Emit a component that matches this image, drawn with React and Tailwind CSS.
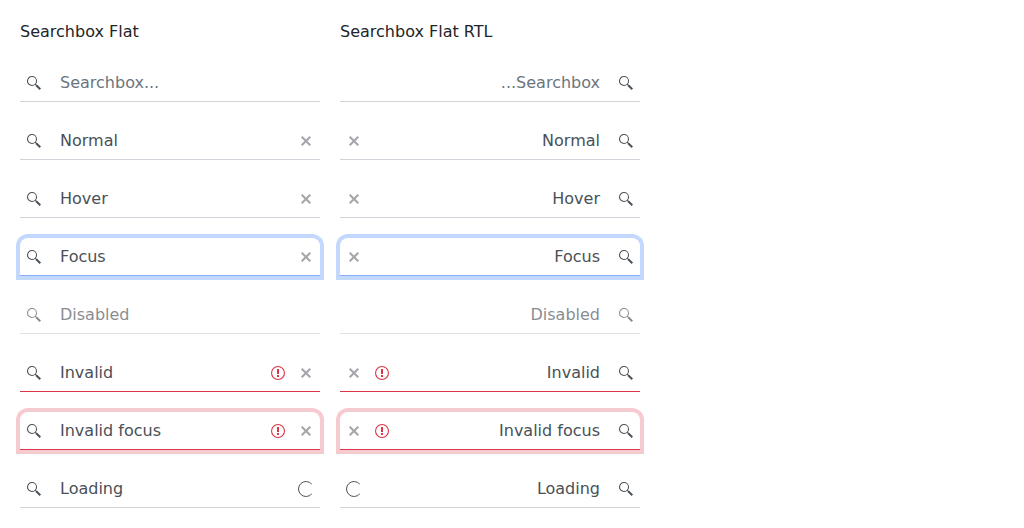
import React from 'react';
import clsx from 'clsx';

const ROWS = [
  { placeholder: true },
  { label: 'Normal', clear: true },
  { label: 'Hover', clear: true },
  { label: 'Focus', clear: true, focus: true },
  { label: 'Disabled', disabled: true },
  { label: 'Invalid', clear: true, invalid: true },
  { label: 'Invalid focus', clear: true, invalid: true, focus: true },
  { label: 'Loading', loading: true },
];

function IconCell({ className, children }) {
  return (
    <span className={clsx('flex w-7 shrink-0 items-start justify-center pt-[11px]', className)}>
      {children}
    </span>
  );
}

function SearchIcon() {
  return (
    <svg viewBox="0 0 16 16" className="size-4" fill="none" stroke="currentColor">
      <circle cx="6" cy="6" r="4.5" strokeWidth="1.05" />
      <path d="M9.2 9.2 10.6 10.6" strokeWidth="1.1" />
      <path d="M10.2 10.2 14.3 14.3" strokeWidth="2" />
    </svg>
  );
}

function ClearIcon() {
  return (
    <svg viewBox="0 0 16 16" className="size-4" fill="none" stroke="currentColor" strokeWidth="2.1">
      <path d="M3.7 3.7 12.3 12.3M12.3 3.7 3.7 12.3" />
    </svg>
  );
}

function InvalidIcon() {
  return (
    <svg viewBox="0 0 16 16" className="size-4" fill="none" stroke="currentColor">
      <circle cx="8" cy="8" r="6.45" strokeWidth="1.1" />
      <path d="M8 4V9M8 10V12" strokeWidth="2" />
    </svg>
  );
}

function LoadingIcon() {
  return (
    <svg viewBox="0 0 16 16" className="size-4" fill="none" stroke="currentColor" strokeWidth="1">
      <path d="M13.7 3.1A7.5 7.5 0 1 0 13.7 12.9" />
    </svg>
  );
}

function Searchbox({ label, placeholder, clear, focus, disabled, invalid, loading }) {
  return (
    <div
      className={clsx(
        'flex h-[38px] w-[300px] border-b text-[#495057]',
        focus && 'rounded-t-[8px]',
        focus && !invalid && 'border-[#86b0fa] shadow-[0_0_0_4px_#c2d8fe]',
        focus && invalid && 'shadow-[0_0_0_4px_#f6cbd0]',
        invalid && 'border-[#dc3545]',
        !focus && !invalid && 'border-[#ced4da]',
        disabled && 'opacity-65',
      )}
    >
      <IconCell>
        <SearchIcon />
      </IconCell>
      <span className={clsx('flex-1 px-3 pt-[7px] leading-6', placeholder && 'text-[#6c757d]')}>
        {placeholder ? 'Searchbox...' : label}
      </span>
      {invalid && (
        <IconCell className="text-[#dc3545]">
          <InvalidIcon />
        </IconCell>
      )}
      {clear && (
        <IconCell className="text-[#a4a7ab]">
          <ClearIcon />
        </IconCell>
      )}
      {loading && (
        <IconCell>
          <LoadingIcon />
        </IconCell>
      )}
    </div>
  );
}

function Column({ title, dir }) {
  return (
    <section className="flex w-[300px] flex-col gap-5">
      <h2 className="h-6 leading-6">{title}</h2>
      <div dir={dir} className="flex flex-col gap-5">
        {ROWS.map((row, i) => (
          <Searchbox key={i} {...row} />
        ))}
      </div>
    </section>
  );
}

export default function App() {
  return (
    <main className="flex h-[528px] gap-5 overflow-hidden bg-white p-5 font-['DejaVu_Sans',sans-serif] text-base text-[#212529]">
      <Column title="Searchbox Flat" dir="ltr" />
      <Column title="Searchbox Flat RTL" dir="rtl" />
    </main>
  );
}
